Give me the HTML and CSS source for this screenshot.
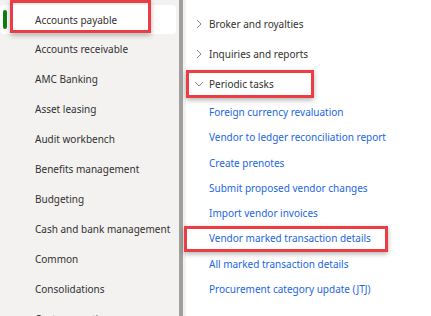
FILE: index.html
```html
<!DOCTYPE html>
<html>
<head>
<meta charset="utf-8">
<link rel="stylesheet" href="styles.css">
</head>
<body>
<div class="app">
  <nav class="modules">
    <div class="mod selected"><span class="bar"></span><span class="label">Accounts payable</span><span class="mark mark-ap"></span></div>
    <div class="mod"><span class="label">Accounts receivable</span></div>
    <div class="mod"><span class="label">AMC Banking</span></div>
    <div class="mod"><span class="label">Asset leasing</span></div>
    <div class="mod"><span class="label">Audit workbench</span></div>
    <div class="mod"><span class="label">Benefits management</span></div>
    <div class="mod"><span class="label">Budgeting</span></div>
    <div class="mod"><span class="label">Cash and bank management</span></div>
    <div class="mod"><span class="label">Common</span></div>
    <div class="mod"><span class="label">Consolidations</span></div>
    <div class="mod"><span class="label">Cost accounting</span></div>
  </nav>
  <div class="scroll"><div class="thumb"></div></div>
  <main class="menu">
    <div class="group"><svg class="chev" width="8" height="10" viewBox="0 0 8 10"><path d="M2 1 L6 5 L2 9" fill="none" stroke="#8a8886" stroke-width="1"/></svg><span>Broker and royalties</span></div>
    <div class="group"><svg class="chev" width="8" height="10" viewBox="0 0 8 10"><path d="M2 1 L6 5 L2 9" fill="none" stroke="#8a8886" stroke-width="1"/></svg><span>Inquiries and reports</span></div>
    <div class="group open"><svg class="chev" width="10" height="8" viewBox="0 0 10 8"><path d="M1 2 L5 6 L9 2" fill="none" stroke="#8a8886" stroke-width="1"/></svg><span>Periodic tasks</span><span class="mark mark-pt"></span></div>
    <ul class="links">
      <li>Foreign currency revaluation</li>
      <li>Vendor to ledger reconciliation report</li>
      <li>Create prenotes</li>
      <li>Submit proposed vendor changes</li>
      <li>Import vendor invoices</li>
      <li class="marked">Vendor marked transaction details<span class="mark mark-vm"></span></li>
      <li>All marked transaction details</li>
      <li>Procurement category update (JTJ)</li>
    </ul>
    <div class="group"><svg class="chev" width="8" height="10" viewBox="0 0 8 10"><path d="M2 1 L6 5 L2 9" fill="none" stroke="#8a8886" stroke-width="1"/></svg><span>Setup</span></div>
  </main>
</div>
</body>
</html>
```

FILE: styles.css
```css
html, body {
  margin: 0;
  padding: 0;
  background: #ffffff;
  overflow: hidden;
}
body {
  font-family: "Noto Sans", "Segoe UI", sans-serif;
  font-size: 10px;
  color: #323130;
  width: 431px;
  height: 316px;
}
.app {
  display: flex;
  height: 316px;
  overflow: hidden;
}
.modules {
  width: 178px;
  flex: none;
  background: #f3f2f1;
  padding-top: 4px;
  box-sizing: border-box;
}
.mod {
  position: relative;
  height: 30px;
  display: flex;
  align-items: center;
  padding-left: 35px;
  width: 176px;
  box-sizing: border-box;
  white-space: nowrap;
}
.mod.selected {
  background: #ffffff;
  border-radius: 4px;
  height: 29px;
  margin-top: 1px;
}
.bar {
  position: absolute;
  left: 3px;
  top: 5px;
  width: 4px;
  height: 19px;
  border-radius: 2px;
  background: #107c10;
}
.scroll {
  width: 8px;
  flex: none;
  display: flex;
  background: #f3f2f1;
}
.thumb {
  width: 4px;
  margin-left: 1px;
  background: #a19f9d;
}
.mark {
  position: absolute;
  border: 3px solid #ea3e44;
  box-sizing: border-box;
  box-shadow: 0 2px 5px rgba(0, 0, 0, 0.3);
  pointer-events: none;
}
.mark-ap {
  left: 10px;
  top: -5px;
  width: 141px;
  height: 33px;
}
.menu {
  flex: 1;
  padding-top: 9px;
  position: relative;
}
.group {
  position: relative;
  height: 30px;
  display: flex;
  align-items: center;
  padding-left: 8px;
  white-space: nowrap;
}
.chev {
  width: 10px;
  margin-right: 5px;
  flex: none;
}
.mark-pt {
  left: 0;
  top: 1px;
  width: 128px;
  height: 28px;
}
.links {
  list-style: none;
  margin: 0;
  padding: 1px 0 5px 23px;
  color: #2266e3;
}
.links li {
  height: 25.3px;
  line-height: 25.3px;
  position: relative;
  white-space: nowrap;
}
.mark-vm {
  left: -25px;
  top: 0;
  width: 204px;
  height: 26px;
}
```
